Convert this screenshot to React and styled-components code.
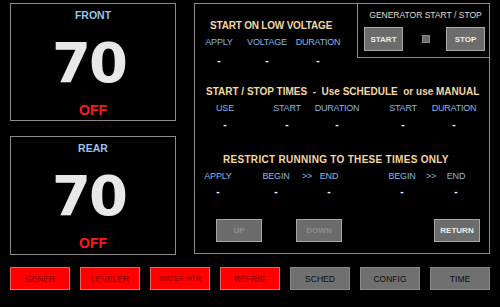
import styled, { createGlobalStyle } from 'styled-components';

const GlobalStyle = createGlobalStyle`
  html, body {
    margin: 0;
    padding: 0;
    background: #000;
  }
  body {
    font-family: "Liberation Sans", Arial, sans-serif;
  }
`;

const Page = styled.div`
  width: 500px;
  height: 307px;
  box-sizing: border-box;
  padding: 3px 0 0 10px;
  background: #000;
  display: flex;
  flex-direction: column;
`;

const Main = styled.div`
  display: flex;
  gap: 18px;
`;

const LeftColumn = styled.div`
  width: 166px;
  display: flex;
  flex-direction: column;
  gap: 15px;
`;

const Gauge = styled.div`
  height: ${p => p.$h}px;
  box-sizing: border-box;
  border: 1px solid #8a8a8a;
  display: flex;
  flex-direction: column;
  align-items: center;
  padding-top: 5px;
`;

const GaugeName = styled.div`
  font-size: 10.5px;
  line-height: 12px;
  font-weight: bold;
  color: #96c3ea;
`;

const GaugeValue = styled.div`
  margin-top: 14px;
  font-family: "DejaVu Sans", Verdana, sans-serif;
  font-weight: bold;
  font-size: 56px;
  line-height: 56px;
  letter-spacing: -2px;
  padding-right: 8px;
  color: #e8e8e8;
`;

const GaugeState = styled.div`
  margin-top: 11px;
  font-size: 14px;
  line-height: 16px;
  font-weight: bold;
  color: #ff1a1a;
`;

const ControlPanel = styled.div`
  width: 296px;
  height: 251px;
  box-sizing: border-box;
  border: 1px solid #8a8a8a;
  display: flex;
  flex-direction: column;
`;

const TopRow = styled.div`
  display: flex;
  align-items: flex-start;
`;

const VoltageSection = styled.div`
  flex: 1;
  padding-top: 16px;
`;

const Section = styled.div`
  margin-top: ${p => p.$mt}px;
`;

const Title = styled.div`
  font-size: 10px;
  line-height: 12px;
  font-weight: bold;
  letter-spacing: ${p => p.$ls ?? 0}px;
  color: #f2d8a6;
  white-space: pre;
  padding-left: ${p => p.$pl}px;
`;

const Fields = styled.div`
  display: grid;
  grid-template-columns: ${p => p.$tracks};
  margin-top: 5px;
`;

const Field = styled.div`
  grid-column: ${p => p.$col};
  display: flex;
  flex-direction: column;
  align-items: center;
  gap: ${p => p.$gap}px;
  white-space: nowrap;
`;

const FieldLabel = styled.div`
  font-size: 9px;
  line-height: 11px;
  letter-spacing: -0.2px;
  color: #86b6e6;
`;

const FieldValue = styled.div`
  font-size: 10px;
  line-height: 10px;
  height: 10px;
  font-weight: bold;
  color: #fff;
`;

const GenBox = styled.div`
  width: 132px;
  height: 54px;
  box-sizing: border-box;
  border-left: 1px solid #8a8a8a;
  border-bottom: 1px solid #8a8a8a;
  padding: 6px 4px 0 6px;
  display: flex;
  flex-direction: column;
`;

const GenTitle = styled.div`
  font-size: 8.5px;
  line-height: 11px;
  color: #e6dccd;
  text-align: center;
  padding-left: 2px;
`;

const GenControls = styled.div`
  margin-top: 6px;
  display: flex;
  align-items: center;
  justify-content: space-between;
`;

const PanelButton = styled.button`
  width: ${p => p.$w}px;
  height: ${p => p.$h}px;
  box-sizing: border-box;
  margin: 0;
  padding: 0;
  background: #6c6c6c;
  border: 1px solid #a8a8a8;
  border-radius: 0;
  font-family: "Liberation Sans", Arial, sans-serif;
  font-size: 8px;
  font-weight: bold;
  color: ${p => (p.$dim ? '#8e8e8e' : '#ececec')};
  cursor: pointer;
`;

const Indicator = styled.span`
  width: 6px;
  height: 6px;
  background: #6a6a6a;
  border: 1px solid #8c8c8c;
  margin-left: 2px;
`;

const ButtonRow = styled.div`
  margin-top: auto;
  padding: 0 9px 11px 21px;
  display: flex;
  gap: 34px;

  & > :last-child {
    margin-left: auto;
  }
`;

const NavBar = styled.div`
  margin-top: 12px;
  display: flex;
  gap: 10px;
`;

const NavButton = styled.button`
  width: 60px;
  height: 23px;
  box-sizing: border-box;
  margin: 0;
  padding: 0;
  border-radius: 0;
  background: ${p => (p.$on ? '#ff0000' : '#707070')};
  border: 1px solid ${p => (p.$on ? '#e46a6a' : '#8a8a8a')};
  color: ${p => (p.$on ? '#820000' : '#0e0e0e')};
  font-family: "Liberation Sans", Arial, sans-serif;
  font-size: ${p => p.$fs || 8.5}px;
  white-space: nowrap;
  cursor: pointer;
`;

const voltageFields = [
  { label: 'APPLY', value: '-' },
  { label: 'VOLTAGE', value: '-' },
  { label: 'DURATION', value: '-' },
];

const timeFields = [
  { label: 'USE', value: '-' },
  { label: 'START', value: '-' },
  { label: 'DURATION', value: '-' },
  { label: 'START', value: '-' },
  { label: 'DURATION', value: '-' },
];

const restrictFields = [
  { label: 'APPLY', value: '-' },
  { label: 'BEGIN', value: '-' },
  { label: '>>', value: '' },
  { label: 'END', value: '-' },
  { label: 'BEGIN', value: '-' },
  { label: '>>', value: '' },
  { label: 'END', value: '-' },
];

const navItems = [
  { label: 'GENER', on: true },
  { label: 'LEVELER', on: true },
  { label: 'WATER HTR', on: true, fs: 7.2 },
  { label: 'REFRIG', on: true },
  { label: 'SCHED' },
  { label: 'CONFIG' },
  { label: 'TIME' },
];

// fields sit on even tracks, odd tracks are the gaps between them
const FieldGrid = ({ fields, tracks, gap }) => (
  <Fields $tracks={tracks}>
    {fields.map((f, i) => (
      <Field key={i} $col={i * 2 + 2} $gap={gap}>
        <FieldLabel>{f.label}</FieldLabel>
        <FieldValue>{f.value}</FieldValue>
      </Field>
    ))}
  </Fields>
);

const App = () => {
  return (
    <Page>
      <GlobalStyle />
      <Main>
        <LeftColumn>
          <Gauge $h={118}>
            <GaugeName>FRONT</GaugeName>
            <GaugeValue>70</GaugeValue>
            <GaugeState>OFF</GaugeState>
          </Gauge>
          <Gauge $h={119}>
            <GaugeName>REAR</GaugeName>
            <GaugeValue>70</GaugeValue>
            <GaugeState>OFF</GaugeState>
          </Gauge>
        </LeftColumn>

        <ControlPanel>
          <TopRow>
            <VoltageSection>
              <Title $pl={15} $ls={-0.2}>START ON LOW VOLTAGE</Title>
              <FieldGrid
                fields={voltageFields}
                tracks="2px 44px 4px 44px 7px 44px"
                gap={8}
              />
            </VoltageSection>
            <GenBox>
              <GenTitle>GENERATOR START / STOP</GenTitle>
              <GenControls>
                <PanelButton $w={39} $h={24}>START</PanelButton>
                <Indicator />
                <PanelButton $w={39} $h={24}>STOP</PanelButton>
              </GenControls>
            </GenBox>
          </TopRow>

          <Section $mt={20}>
            <Title $pl={11}>{'START / STOP TIMES  -  Use SCHEDULE  or use MANUAL'}</Title>
            <FieldGrid
              fields={timeFields}
              tracks="10px 40px 22px 40px 6px 48px 22px 40px 7px 48px"
              gap={6}
            />
          </Section>

          <Section $mt={24}>
            <Title $pl={28} $ls={0.3}>RESTRICT RUNNING TO THESE TIMES ONLY</Title>
            <FieldGrid
              fields={restrictFields}
              tracks="3px 40px 20px 36px 6px 14px 3px 24px 43px 36px 4px 14px 6px 24px"
              gap={5}
            />
          </Section>

          <ButtonRow>
            <PanelButton $w={46} $h={23} $dim>UP</PanelButton>
            <PanelButton $w={46} $h={23} $dim>DOWN</PanelButton>
            <PanelButton $w={46} $h={23}>RETURN</PanelButton>
          </ButtonRow>
        </ControlPanel>
      </Main>

      <NavBar>
        {navItems.map(item => (
          <NavButton key={item.label} $on={item.on} $fs={item.fs}>
            {item.label}
          </NavButton>
        ))}
      </NavBar>
    </Page>
  );
};

export default App;
